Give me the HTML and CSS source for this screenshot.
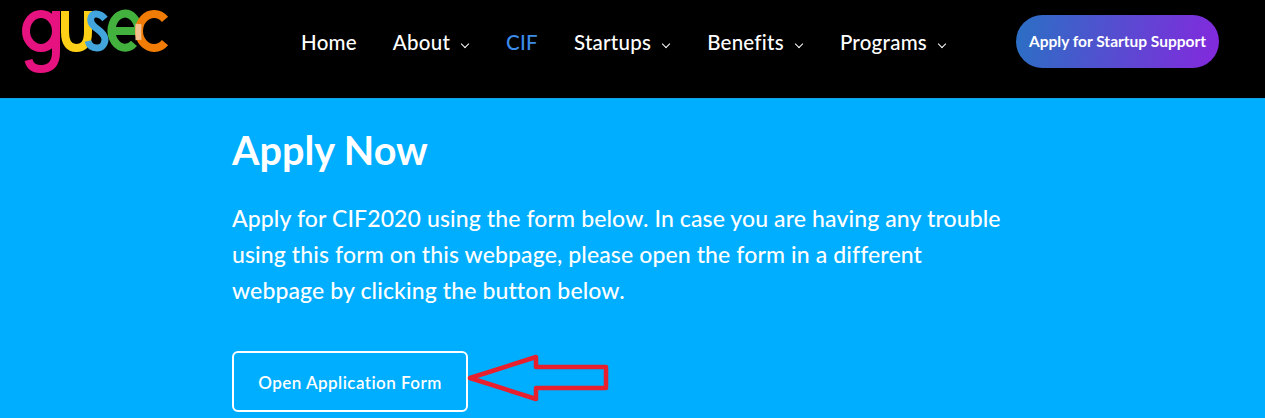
FILE: index.html
```html
<!DOCTYPE html>
<html lang="en">
<head>
  <meta charset="UTF-8">
  <title>GUSEC - Apply Now</title>
  <link rel="stylesheet" href="styles.css">
</head>
<body>
  <!-- Top bar -->
  <header class="site-header">
    <a class="logo" href="#" aria-label="gusec">
      <svg width="170" height="80" viewBox="0 0 170 80" fill="none" stroke-width="8">
        <ellipse cx="41" cy="31" rx="15" ry="17" stroke="#e6127f"/>
        <path d="M56 11 V52 C56 66 48 69 40 69 C34 69 30 66 28.5 60" stroke="#e6127f"/>
        <path d="M65 11 V32 C65 44 70 48 76 48 C83 48 88 44 88 32 V11" stroke="#fdd017"/>
        <path d="M105 19 C101 14 98 14 96 14 C91 14 90 19 91 22 C93 29 104 30 105 39 C105 45 101 48 97 48 C92 48 89 45 88 41" stroke="#43a5dd" stroke-width="7"/>
        <path d="M111.5 31 H138.5 A13.5 17 0 1 0 134 43.3" stroke="#43b13d"/>
        <path d="M165 19.4 A15 17 0 1 0 165 42.6" stroke="#f07c05"/>
        <path d="M138.5 24 Q138 31 138.5 40" stroke="#f5c08f" stroke-width="6"/>
      </svg>
    </a>
    <nav class="main-nav">
      <a href="#">Home</a>
      <a href="#" class="has-sub">About</a>
      <a href="#" class="active">CIF</a>
      <a href="#" class="has-sub">Startups</a>
      <a href="#" class="has-sub">Benefits</a>
      <a href="#" class="has-sub">Programs</a>
    </nav>
    <a href="#" class="support-btn">Apply for Startup Support</a>
  </header>

  <!-- Apply section -->
  <main class="apply">
    <h1>Apply Now</h1>
    <p>Apply for CIF2020 using the form below. In case you are having any trouble using this form on this webpage, please open the form in a different webpage by clicking the button below.</p>
    <div class="form-link">
      <a href="#" class="form-btn">Open Application Form</a>
      <svg class="arrow" width="144" height="50" viewBox="0 0 144 50" fill="none">
        <path d="M3 25 L69 4 V14 H139 V35 H69 V46 Z" stroke="#e8202e" stroke-width="4.5" stroke-linejoin="round"/>
      </svg>
    </div>
  </main>
</body>
</html>
```

FILE: styles.css
```css
/* Base styles */
body {
  margin: 0;
  height: 418px;
  overflow: hidden;
  background-color: #00aeff;
  color: white;
  font-family: "Lato", Arial, sans-serif;
}

a {
  color: white;
  text-decoration: none;
}

/* Top bar */
.site-header {
  display: flex;
  height: 99px;
  background-color: black;
  border-bottom: 1px solid #10a5e6;
  box-sizing: border-box;
}

.logo {
  width: 301px;
}

.main-nav {
  display: flex;
  gap: 36px;
  height: 83px;
  align-items: center;
  width: 715px;
  font-size: 20.5px;
  font-weight: 500;
  letter-spacing: 0.25px;
  white-space: nowrap;
}

.main-nav .active {
  color: #3d8be8;
}

.main-nav .has-sub::after {
  content: "";
  display: inline-block;
  width: 5px;
  height: 5px;
  margin: 0 2px 3px 12px;
  border-right: 1.5px solid white;
  border-bottom: 1.5px solid white;
  transform: rotate(45deg);
}

.support-btn {
  width: 203px;
  height: 53px;
  margin-top: 15px;
  border-radius: 27px;
  background: linear-gradient(100deg, #2a70c4, #8428dd);
  font-size: 15.5px;
  font-weight: 700;
  line-height: 53px;
  text-align: center;
  white-space: nowrap;
}

/* Apply section */
.apply {
  padding: 0 0 0 232px;
}

.apply h1 {
  margin: 26px 0 0;
  font-size: 39.6px;
  font-weight: 700;
  line-height: 50px;
}

.apply p {
  width: 775px;
  margin: 25px 0 0;
  font-size: 23px;
  font-weight: 500;
  letter-spacing: 0.12px;
  line-height: 36px;
}

.form-link {
  position: relative;
  margin-top: 43px;
}

.form-btn {
  display: block;
  width: 236px;
  height: 61px;
  border: 2px solid white;
  border-radius: 6px;
  box-sizing: border-box;
  font-size: 17px;
  font-weight: 600;
  letter-spacing: 0.45px;
  line-height: 59px;
  text-align: center;
}

.arrow {
  position: absolute;
  left: 235px;
  top: 2px;
}
```
